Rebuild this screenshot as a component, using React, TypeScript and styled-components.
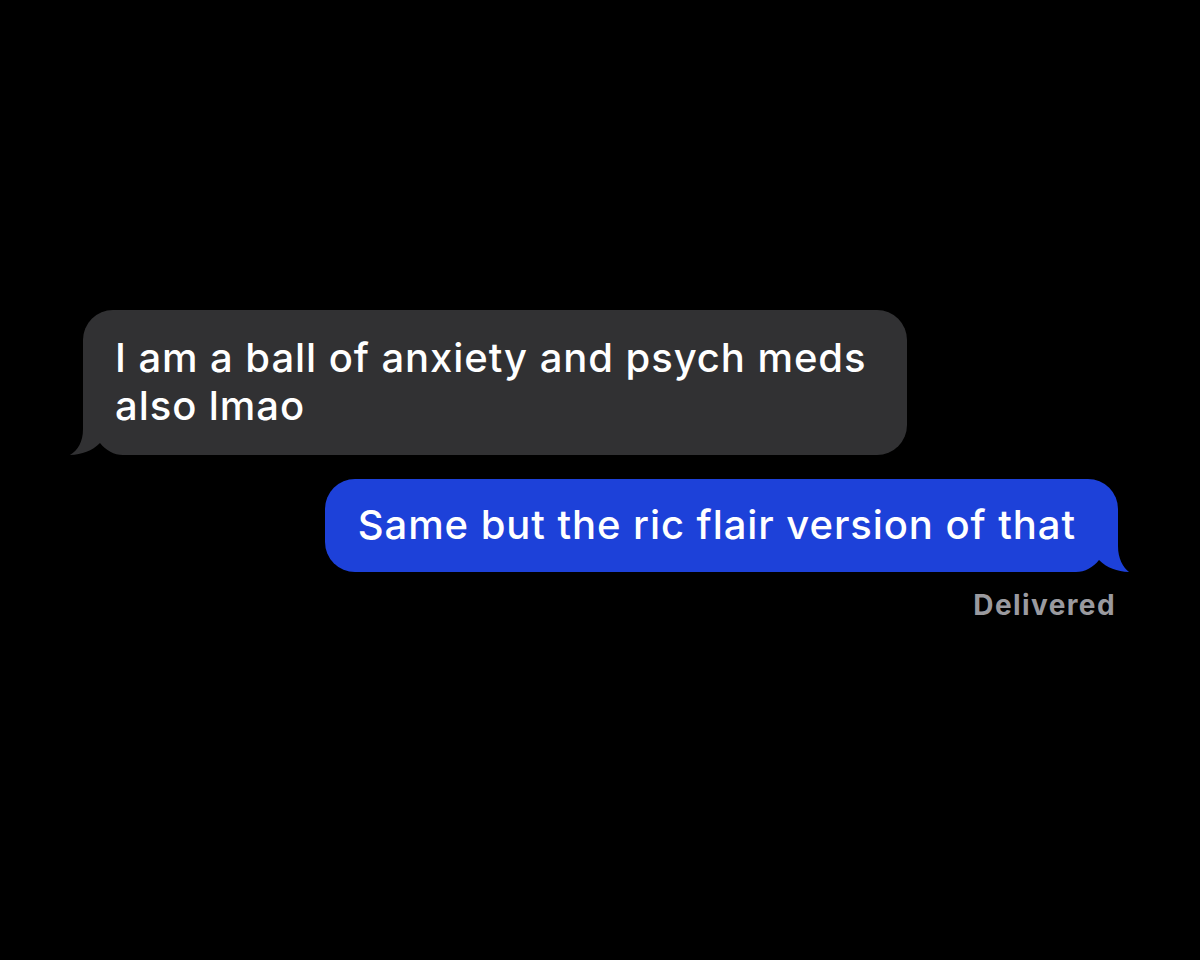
import React from "react";
import styled, { createGlobalStyle } from "styled-components";

const GlobalStyle = createGlobalStyle`
  html, body {
    margin: 0;
    padding: 0;
    background: #000000;
  }
  body {
    font-family: Inter, "Noto Sans", "Liberation Sans", sans-serif;
    -webkit-font-smoothing: antialiased;
  }
`;

const Screen = styled.div`
  width: 1200px;
  min-height: 960px;
  background: #000000;
  display: flex;
  flex-direction: column;
  padding-top: 310px;
  box-sizing: border-box;
`;

const Row = styled.div<{ $side: "left" | "right" }>`
  display: flex;
  flex-direction: column;
  align-items: ${(p) => (p.$side === "left" ? "flex-start" : "flex-end")};
  padding-left: ${(p) => (p.$side === "left" ? "83px" : "0")};
  padding-right: ${(p) => (p.$side === "right" ? "82px" : "0")};
  margin-top: ${(p) => (p.$side === "right" ? "24px" : "0")};
`;

const Bubble = styled.div<{ $mine?: boolean }>`
  position: relative;
  box-sizing: border-box;
  width: ${(p) => (p.$mine ? "auto" : "824px")};
  max-width: 824px;
  padding: ${(p) => (p.$mine ? "22px 42px 23px 33px" : "24px 20px 25px 32px")};
  border-radius: 30px;
  background: ${(p) => (p.$mine ? "#1d41d9" : "#313133")};
  color: #ffffff;
  font-family: Inter, "Noto Sans", "Liberation Sans", sans-serif;
  font-size: 40px;
  font-weight: 500;
  line-height: 48px;
  letter-spacing: 0.93px;
`;

const Text = styled.span`
  position: relative;
  z-index: 1;
`;

const TailSvg = styled.svg<{ $mine?: boolean }>`
  position: absolute;
  bottom: 0;
  width: 54px;
  height: 44px;
  ${(p) =>
    p.$mine
      ? "right: -12px; transform: scaleX(-1);"
      : "left: -14px;"}
`;

const Status = styled.div`
  margin-top: 17px;
  margin-right: 2px;
  font-family: Inter, "Noto Sans", "Liberation Sans", sans-serif;
  font-size: 28px;
  font-weight: 700;
  line-height: 32px;
  color: #9a9a9f;
  letter-spacing: 1.4px;
`;

function Tail({ mine, color }: { mine?: boolean; color: string }) {
  const shift = mine ? 2 : 0;
  return (
    <TailSvg $mine={mine} viewBox="0 0 54 44" aria-hidden="true">
      <path
        d={`M${14 - shift},0 L${14 - shift},18 C${14 - shift},31 ${9 - shift},39 1,44 L54,44 L54,0 Z`}
        fill={color}
      />
      <path d="M1,44 C13,43.5 23,40 31,32 C37,39.5 45,44 54,44 Z" fill="#000000" />
    </TailSvg>
  );
}

export default function App() {
  return (
    <>
      <GlobalStyle />
      <Screen>
        <Row $side="left">
          <Bubble>
            <Tail color="#313133" />
            <Text>I am a ball of anxiety and psych meds also lmao</Text>
          </Bubble>
        </Row>
        <Row $side="right">
          <Bubble $mine>
            <Tail mine color="#1d41d9" />
            <Text>Same but the ric flair version of that</Text>
          </Bubble>
          <Status>Delivered</Status>
        </Row>
      </Screen>
    </>
  );
}
